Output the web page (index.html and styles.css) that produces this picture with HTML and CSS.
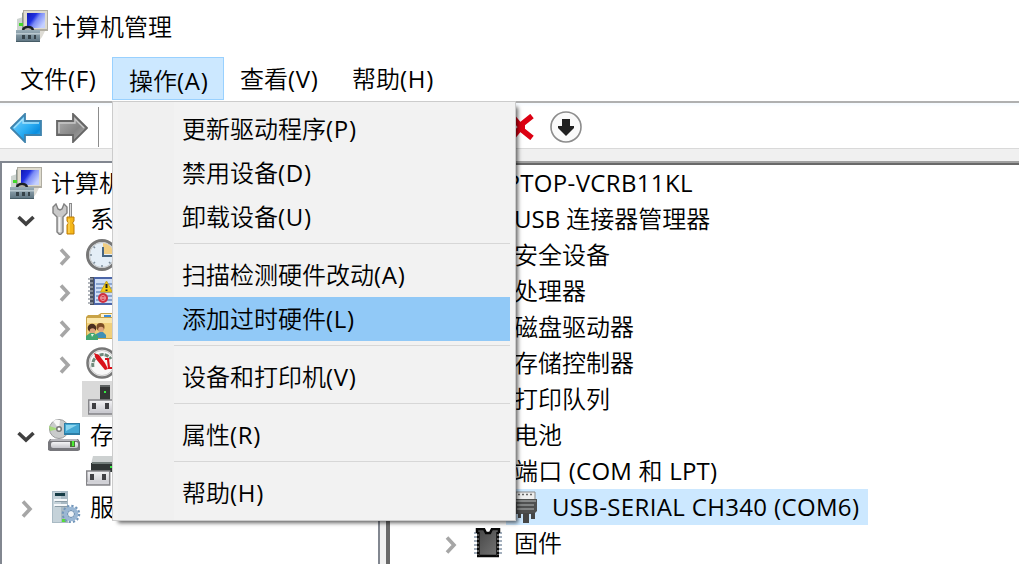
FILE: index.html
```html
<!DOCTYPE html>
<html lang="zh-CN">
<head>
<meta charset="utf-8">
<title>计算机管理</title>
<link rel="stylesheet" href="styles.css">
</head>
<body>
<svg class="defs" aria-hidden="true">
  <defs>
    <linearGradient id="screen" x1="0" y1="0" x2="1" y2=".6"><stop offset="0" stop-color="#1018b0"/><stop offset=".4" stop-color="#2030e0"/><stop offset=".6" stop-color="#7c8cf6"/><stop offset="1" stop-color="#c4d0ff"/></linearGradient>
    <linearGradient id="box" x1="0" y1="0" x2="0" y2="1"><stop offset="0" stop-color="#9aaeb8"/><stop offset="1" stop-color="#5d7380"/></linearGradient>
    <linearGradient id="blue" x1="0" y1="0" x2="1" y2="1"><stop offset="0" stop-color="#8fd8fb"/><stop offset=".5" stop-color="#2fb0f4"/><stop offset=".75" stop-color="#0a8ee0"/><stop offset="1" stop-color="#5cc4f6"/></linearGradient>
    <linearGradient id="gray" x1="0" y1="0" x2="1" y2="1"><stop offset="0" stop-color="#b4b4b4"/><stop offset=".6" stop-color="#858585"/><stop offset="1" stop-color="#b0b0b0"/></linearGradient>
    <linearGradient id="metal" x1="0" y1="0" x2="0" y2="1"><stop offset="0" stop-color="#f4f4f6"/><stop offset="1" stop-color="#c4c4ca"/></linearGradient>
    <linearGradient id="chip" x1="0" y1="0" x2="1" y2="1"><stop offset="0" stop-color="#444"/><stop offset="1" stop-color="#777"/></linearGradient>
    <symbol id="computer" viewBox="0 0 32 32">
      <path d="M1 9l6-2v13H1z" fill="#cdd4d0"/><path d="M6 3l3-2v18H6z" fill="#8c9690"/>
      <path d="M3 13h4v3H3z" fill="#43d82c"/>
      <path d="M7 0h25v21H7z" fill="#b0ada2"/><path d="M8 1h23v18H8z" fill="#dedbce"/>
      <path d="M11 3h18v15H11z" fill="url(#screen)"/>
      <path d="M17 21h12l-3 6-3 4v-10z" fill="#dedcd5"/>
      <path d="M7 20c1-4 9-4 10 0" fill="none" stroke="#1c2024" stroke-width="2.500"/>
      <path d="M0 20h24v12H0z" fill="url(#box)"/><path d="M0 23h24v1.500H0z" fill="#b9c8cf"/>
      <path d="M6 25h3v4H6zM12 25h3v4h-3zM18 25h2v4h-2z" fill="#36434a"/><path d="M0 31h24v1H0z" fill="#465c66"/>
    </symbol>
    <symbol id="tools" viewBox="0 0 32 32">
      <path d="M4 1L1 4v6l4 4v15l3 3 3-3V14l4-4V4l-3-3-2 5-2 1-2-1z" fill="#c9c9c9" stroke="#808080" stroke-width="1.400"/>
      <path d="M7.500 14v15" stroke="#f5f5f5" stroke-width="2"/>
      <path d="M17 0h3v15h-3z" fill="#8b8b8b"/><path d="M18 1h1v13h-1z" fill="#ddd"/>
      <path d="M15 14h7v4l-1.500 2 1.500 2v9h-7v-9l1.500-2-1.500-2z" fill="#f5b719" stroke="#bd7b04"/><path d="M17 16v14" stroke="#ffe27d"/>
    </symbol>
    <symbol id="clock" viewBox="0 0 32 32">
      <circle cx="16" cy="16" r="14.500" fill="#e4eef7" stroke="#777" stroke-width="3"/><circle cx="16" cy="16" r="12.500" fill="none" stroke="#c7c7c7"/>
      <path d="M17 15V4a12 12 0 0 1 11 11z" fill="#f0cd82"/><path d="M17 8v9h9" fill="none" stroke="#486681" stroke-width="2"/>
      <path d="M4 16h2M16 26v2M7.500 7.500l1.500 1.500M7.500 24.500L9 23M24.500 24.500L23 23" stroke="#7d8d9a" stroke-width="1.500"/>
    </symbol>
    <symbol id="events" viewBox="0 0 32 32">
      <path d="M4 2h28v28H4z" fill="#4c66a8"/><path d="M9 4h23v24H9z" fill="#cfdef6"/><path d="M4 2h4v28H4z" fill="#4a5261"/>
      <path d="M2 4h5M2 8h5M2 12h5M2 16h5M2 20h5M2 24h5M2 28h5" stroke="#999ea7" stroke-width="1.500"/>
      <path d="M10 9h20M10 13h20M10 17h20M10 21h20M10 25h20" stroke="#7493c4" stroke-width="1.500"/>
      <path d="M20.500 6l6 11h-12z" fill="#f3cb10" stroke="#c7a526"/><path d="M20.500 9v4M20.500 14.500v1.500" stroke="#222" stroke-width="2"/>
      <circle cx="17" cy="23" r="5" fill="#cf3040"/><circle cx="17" cy="23" r="2.500" fill="none" stroke="#ef9aa2"/><path d="M15 23h4" stroke="#f8d0d2"/>
    </symbol>
    <symbol id="share" viewBox="0 0 32 32">
      <path d="M0 6l2-2h10l3-2h17v26H0z" fill="#c9a347"/><path d="M1 7h31v20H1z" fill="#f0cf7b"/><path d="M1 7h31v5H1z" fill="#fae6a9"/>
      <path d="M15 3h17v3H15z" fill="#fff4d3"/><path d="M18 4h7v2h-7z" fill="#3c8cda"/>
      <circle cx="14.500" cy="16" r="4" fill="#7b4c25"/><circle cx="15" cy="18.500" r="2.800" fill="#dea67c"/><path d="M10 27v-4l4-2h3l3 3v3z" fill="#408fb5"/>
      <circle cx="6" cy="17" r="4.300" fill="#4a2e1e"/><circle cx="6.500" cy="20" r="2.800" fill="#dda57e"/><path d="M0 29v-4l4-3h4l4 3v4z" fill="#43a66f"/><path d="M5 23l1 3 2-3" fill="#e5f7e8"/>
    </symbol>
    <symbol id="gauge" viewBox="0 0 32 32">
      <circle cx="16" cy="16" r="14.500" fill="#f8f8f8" stroke="#777" stroke-width="2.500"/><circle cx="16" cy="16" r="12.500" fill="none" stroke="#c9c9c9"/>
      <path d="M7 20a10 10 0 0 1 18-8" fill="none" stroke="#6e897a" stroke-width="3" stroke-dasharray="4 1"/>
      <path d="M8 6l5 2 6 8 3 6-3 1L10 12z" fill="#d9111b"/><path d="M19 12h3l1 9h4" fill="none" stroke="#d9111b" stroke-width="2.200"/>
    </symbol>
    <symbol id="device" viewBox="0 0 32 32">
      <path d="M12 2h10v15H12z" fill="#343636"/><path d="M12 2h10v2H12z" fill="#606464"/><path d="M16 8h2v2h-2z" fill="#37ec43"/>
      <path d="M0.700 17h25v14h-25z" fill="url(#metal)" stroke="#858589" stroke-width="1.500"/><path d="M1 28h24v2H1z" fill="#cbcbd1"/>
      <path d="M4 20h4v6H4zM17 20h4v6h-4z" fill="#3e3e42"/>
    </symbol>
    <symbol id="storage" viewBox="0 0 32 32">
      <circle cx="11" cy="10" r="9.500" fill="#c9cbcb" stroke="#989a9b"/><path d="M11 10L5 2a10 10 0 0 1 7-1z" fill="#f7f7f7"/><path d="M11 10L1 7l1 5z" fill="#a4da7a"/><circle cx="11" cy="10" r="3" fill="#777"/><circle cx="11" cy="10" r="1.500" fill="#fff"/>
      <path d="M16 4h16v12H16z" fill="#2d7da5"/><path d="M17 5h14v9H17z" fill="#44a8d4"/><path d="M18 6h11L18 12z" fill="#8bd5ef"/>
      <path d="M2 20h28l2 3v8l-2 1H2l-2-1v-8z" fill="#77777c"/><path d="M3 20h26l1 2H2z" fill="#b7b7bc"/><rect x="3" y="23" width="27" height="6" rx="2" fill="url(#metal)"/><path d="M22 22h5v6h-5z" fill="#4a7637"/><path d="M24 22h2v5h-2z" fill="#4bec35"/>
    </symbol>
    <symbol id="disk" viewBox="0 0 32 32">
      <path d="M7 1h25v8H5z" fill="#cdd1d1"/><path d="M5 8h27v9H5z" fill="#303635"/><path d="M6 7h26v2H6z" fill="#717c79"/><path d="M24 11h2v2h-2z" fill="#37e842"/>
      <path d="M0.700 16h23v14h-23z" fill="url(#metal)" stroke="#858589" stroke-width="1.500"/><path d="M4 19h4v6H4zM16 19h4v6h-4z" fill="#404044"/><path d="M1 27h22v2H1z" fill="#d2d2d7"/>
    </symbol>
    <symbol id="services" viewBox="0 0 32 32">
      <path d="M0 0h16v32H0z" fill="#a9bac4"/><path d="M1 1h8v30H1z" fill="#c5d2d9"/><path d="M3 2h10v3H3z" fill="#153b45"/><path d="M2 8h13v2H2zM2 13h13v2H2z" fill="#f5f8fa"/><path d="M3 10h12v1H3zM3 15h12v1H3z" fill="#8b9ca6"/><path d="M10 28h4v3h-4z" fill="#55df34"/>
      <circle cx="19" cy="23" r="8" fill="none" stroke="#7296ba" stroke-width="2.500" stroke-dasharray="2.200 2"/><circle cx="19" cy="23" r="5.500" fill="#fff" stroke="#9ab7d4" stroke-width="3.500"/><circle cx="19" cy="23" r="3.500" fill="#eef3f7" stroke="#6489ad"/>
    </symbol>
    <symbol id="port" viewBox="0 0 32 32">
      <path d="M3 1h19v10H3z" fill="#eee" stroke="#888"/><path d="M5 3.500h16" stroke="#666" stroke-width="1.500" stroke-dasharray="2 2"/>
      <path d="M0 8h24v12l-3 3H3l-3-3z" fill="#4f5050"/><path d="M1 9h22v2H1z" fill="#858787"/><path d="M4 14h17M4 18h17" stroke="#929494" stroke-width="1.300"/>
      <path d="M5 22h3v5H5zM10 22h6v10h-6zM18 22h4v6h-4z" fill="#454646"/>
    </symbol>
    <symbol id="firmware" viewBox="0 0 28 30">
      <path d="M0 5h28M0 9h28M0 13h28M0 17h28M0 21h28M0 25h28" stroke="#a3afbd" stroke-width="2"/>
      <path d="M3 1h7l2 3h4l2-3h7v28H3z" fill="url(#chip)"/>
      <path d="M3 1h7l2 4h4l2-4h7M3 0v5M25 0v5M3 28h22" fill="none" stroke="#080808" stroke-width="2.500"/>
      <path d="M4 4v25M24 4v25" stroke="#080808" stroke-width="2" stroke-dasharray="2 2"/><path d="M5.500 4v24M22.500 4v24" stroke="#222"/>
    </symbol>
    <symbol id="open" viewBox="0 0 18 12"><path d="M1.500 2L9 9l7.500-7" fill="none" stroke="#404040" stroke-width="3.600"/></symbol>
    <symbol id="closed" viewBox="0 0 12 18"><path d="M2 1.500L9 9l-7 7.500" fill="none" stroke="#a6a6a6" stroke-width="3.600"/></symbol>
  </defs>
</svg>

<div class="window">
  <header class="titlebar">
    <svg class="icon"><use href="#computer"/></svg>
    <span>计算机管理</span>
  </header>

  <nav class="menubar">
    <div class="menu-title file">文件<span class="key">(F)</span></div>
    <div class="menu-title active">操作<span class="key">(A)</span>
      <div class="dropdown">
        <div class="item">更新驱动程序<span class="key">(P)</span></div>
        <div class="item">禁用设备<span class="key">(D)</span></div>
        <div class="item">卸载设备<span class="key">(U)</span></div>
        <div class="separator"></div>
        <div class="item">扫描检测硬件改动<span class="key">(A)</span></div>
        <div class="item highlighted">添加过时硬件<span class="key">(L)</span></div>
        <div class="separator"></div>
        <div class="item">设备和打印机<span class="key">(V)</span></div>
        <div class="separator"></div>
        <div class="item">属性<span class="key">(R)</span></div>
        <div class="separator"></div>
        <div class="item">帮助<span class="key">(H)</span></div>
      </div>
    </div>
    <div class="menu-title view">查看<span class="key">(V)</span></div>
    <div class="menu-title help">帮助<span class="key">(H)</span></div>
  </nav>

  <div class="toolbar">
    <svg class="arrow" viewBox="0 0 32 30"><path d="M1 15L15 1v7h16v14H15v7z" fill="url(#blue)" stroke="#3f83ad" stroke-width="1.800"/><path d="M4 15L13 6v4h16" fill="none" stroke="#a9e2fa" stroke-width="1.300"/></svg>
    <svg class="arrow" viewBox="0 0 32 30"><path d="M31 15L17 1v7H1v14h16v7z" fill="url(#gray)" stroke="#666" stroke-width="1.800"/><path d="M3 20V10h16V6l9 9" fill="none" stroke="#c9c9c9" stroke-width="1.300"/></svg>
    <span class="divider"></span>
    <span class="tool-gap"></span>
    <svg class="remove" viewBox="0 0 26 26"><path d="M3 2l9 11L3 24M23 2L13 10v6l10 8M9 13h7" fill="none" stroke="#dc0012" stroke-width="5.500"/></svg>
    <svg class="icon" viewBox="0 0 32 32"><circle cx="16" cy="16" r="15" fill="#fafafa" stroke="#8c8c8c" stroke-width="1.600"/><path d="M12 8h8v7h4v2l-8 8-8-8v-2h4z" fill="#202020"/></svg>
  </div>

  <main class="panes">
    <section class="tree left">
      <div class="row root"><svg class="icon"><use href="#computer"/></svg><span>计算机管理</span></div>
      <div class="row level1"><svg class="chevron down"><use href="#open"/></svg><svg class="icon tool-icon"><use href="#tools"/></svg><span>系统工具</span></div>
      <div class="row level2"><svg class="chevron"><use href="#closed"/></svg><svg class="icon"><use href="#clock"/></svg></div>
      <div class="row level2"><svg class="chevron"><use href="#closed"/></svg><svg class="icon"><use href="#events"/></svg></div>
      <div class="row level2"><svg class="chevron"><use href="#closed"/></svg><svg class="icon"><use href="#share"/></svg></div>
      <div class="row level2"><svg class="chevron"><use href="#closed"/></svg><svg class="icon"><use href="#gauge"/></svg></div>
      <div class="row leaf"><div class="current"><svg class="icon"><use href="#device"/></svg></div></div>
      <div class="row level1"><svg class="chevron down"><use href="#open"/></svg><svg class="icon"><use href="#storage"/></svg><span>存储</span></div>
      <div class="row leaf"><svg class="icon disk"><use href="#disk"/></svg></div>
      <div class="row level1"><svg class="chevron"><use href="#closed"/></svg><svg class="icon tool-icon"><use href="#services"/></svg><span>服务</span></div>
    </section>
    <section class="tree right">
      <div class="row host">LAPTOP-VCRB11KL</div>
      <div class="row category"><span class="latin">USB</span> 连接器管理器</div>
      <div class="row category">安全设备</div>
      <div class="row category">处理器</div>
      <div class="row category">磁盘驱动器</div>
      <div class="row category">存储控制器</div>
      <div class="row category">打印队列</div>
      <div class="row category">电池</div>
      <div class="row category ports">端口 (COM 和 LPT)</div>
      <div class="row port-row"><div class="selected"><svg class="icon"><use href="#port"/></svg><span>USB-SERIAL CH340 (COM6)</span></div></div>
      <div class="row firmware-row"><svg class="chevron"><use href="#closed"/></svg><svg class="chip"><use href="#firmware"/></svg><span>固件</span></div>
    </section>
  </main>
</div>
</body>
</html>
```
FILE: styles.css
```css
* { box-sizing: border-box; }
body { margin: 0; overflow: hidden; background: #fff; color: #000; font: 24px/36px "Open Sans", "Noto Sans CJK SC DemiLight", "Noto Sans CJK SC", sans-serif; }
.defs { position: absolute; width: 0; height: 0; }
svg { display: block; flex: none; }
.window { width: 1019px; height: 564px; display: flex; flex-direction: column; overflow: hidden; white-space: nowrap; }
.icon { width: 32px; height: 32px; }
.key { letter-spacing: .7px; }

.titlebar { height: 57px; padding: 10px 0 0 16px; display: flex; align-items: flex-start; gap: 4px; line-height: 34px; }
.menubar { height: 44px; display: flex; flex: none; }
.menu-title { height: 43px; line-height: 44px; }
.file { width: 112px; padding-left: 20px; }
.active { position: relative; width: 112px; padding-left: 16px; line-height: 45px; background: #cce8ff; border: 1px solid #99d1ff; }
.view { width: 128px; padding-left: 16px; }
.help { padding-left: 0; }

.dropdown { position: absolute; z-index: 2; left: -1px; top: 43px; width: 404px; height: 420px; padding: 5px; border: 1px solid #ccc; background: linear-gradient(to right, #f2f2f2 5px, #f0f0f0 5px, #f0f0f0 61px, #f2f2f2 61px); box-shadow: 4px 4px 4px -2px rgba(0, 0, 0, .6); }
.item { height: 44px; padding-left: 64px; line-height: 43px; }
.highlighted { background: #91c9f7; }
.separator { height: 14px; padding-top: 4px; }
.separator::after { content: ""; display: block; height: 1px; margin-left: 56px; background: #d7d7d7; }

.toolbar { height: 48px; flex: none; display: flex; align-items: center; padding: 4px 0 2px 10px; border-top: 2px solid #b0b0b0; border-bottom: 1px solid #d9d9d9; background: linear-gradient(#f5faff, #fff 4px); }
.arrow { width: 32px; height: 30px; margin: 2px 14px 0 0; }
.divider { width: 1px; height: 40px; margin-left: -4px; background: #8c8c8c; }
.tool-gap { width: 410px; }
.remove { width: 26px; height: 26px; margin-right: 15px; }

.panes { flex: 1; min-height: 0; display: flex; padding-top: 12px; background: #f0f0f0; }
.tree { background: #fff; overflow: hidden; }
.left { width: 380px; border: 2px solid #828790; border-bottom: 0; padding-top: 2px; }
.right { flex: 1; margin-left: 6px; border-left: 4px solid #696969; border-top: 2px solid #a0a0a0; }
.right::before { content: ""; display: block; height: 2px; background: #696969; }
.row { height: 36px; display: flex; align-items: center; line-height: 38px; }
.root { padding-left: 8px; gap: 9px; }
.level1 { padding-left: 15px; }
.level1 span { margin-left: 10px; }
.level1 .icon { margin-left: 13px; }
.level1 .tool-icon { margin-left: 17px; }
.level1 .tool-icon + span { margin-left: 6px; }
.chevron { width: 12px; height: 18px; }
.left .chevron { margin-top: 4px; }
.chevron.down { width: 18px; height: 12px; }
.level1 .chevron:not(.down) { margin: 4px 2px 0 4px; }
.level2 { padding-left: 57px; }
.level2 .icon { margin-left: 15px; }
.leaf { padding-left: 80px; }
.current { width: 220px; height: 36px; padding: 2px 0 0 6px; background: #d9d9d9; }
.disk { margin-left: 4px; }

.right .row { line-height: 36px; }
.host { padding-left: 87px; letter-spacing: .35px; }
.category { padding-left: 124px; }
.category .latin { margin-right: 6px; }
.ports { letter-spacing: .2px; }
.port-row { padding-left: 116px; }
.selected { display: flex; align-items: center; width: 362px; height: 36px; padding-left: 4px; background: #cce8ff; }
.selected .icon { margin-left: 3px; }
.selected span { margin-left: 7px; letter-spacing: .35px; }
.firmware-row { padding-left: 55px; }
.firmware-row .chevron { margin: 3px 17px 0 0; }
.chip { width: 28px; height: 30px; margin-right: 12px; }
```
